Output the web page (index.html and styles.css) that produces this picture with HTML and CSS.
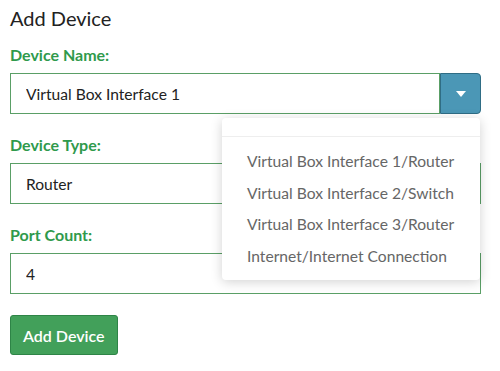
FILE: index.html
```html
<!DOCTYPE html>
<html lang="en">
<head>
  <meta charset="UTF-8">
  <meta name="viewport" content="width=device-width, initial-scale=1.0">
  <title>Add Device</title>
  <link rel="stylesheet" href="styles.css">
</head>
<body>

  <div class="container">
    <h1>Add Device</h1>

    <!-- Device name with dropdown of known interfaces -->
    <div class="form-group">
      <label for="deviceName">Device Name:</label>
      <div class="input-group">
        <input type="text" id="deviceName" value="Virtual Box Interface 1">
        <button class="dropdown-btn" id="dropdownBtn">
          <svg width="10" height="6" viewBox="0 0 10 6"><path d="M0 0 L10 0 L5 6 Z" fill="#fff"/></svg>
        </button>
        <div class="dropdown-menu" id="dropdownMenu">
          <div class="dropdown-header"></div>
          <ul>
            <li>Virtual Box Interface 1/Router</li>
            <li>Virtual Box Interface 2/Switch</li>
            <li>Virtual Box Interface 3/Router</li>
            <li>Internet/Internet Connection</li>
          </ul>
        </div>
      </div>
    </div>

    <div class="form-group">
      <label for="deviceType">Device Type:</label>
      <input type="text" id="deviceType" value="Router">
    </div>

    <div class="form-group">
      <label for="portCount">Port Count:</label>
      <input type="text" id="portCount" value="4">
    </div>

    <button class="btn" id="addDeviceBtn">Add Device</button>
  </div>

</body>
</html>
```

FILE: styles.css
```css
body {
  font-family: Lato, "Open Sans", sans-serif;
  margin: 0;
  color: #222;
}
.container {
  width: 471px;
  padding: 8px 10px;
}
h1 {
  font-size: 20px;
  font-weight: normal;
  margin: 0 0 17px;
  line-height: 20px;
}
.form-group {
  margin-bottom: 21px;
}
.form-group label {
  display: block;
  color: #2f9a4c;
  font-weight: bold;
  font-size: 16px;
  line-height: 20px;
  margin-bottom: 8px;
}
.form-group input {
  display: block;
  box-sizing: border-box;
  width: 100%;
  height: 41px;
  padding: 0 15px;
  border: 1px solid #5a9f66;
  font-family: inherit;
  font-size: 15.6px;
  color: #222;
  outline: none;
}
.input-group {
  position: relative;
  display: flex;
}
.input-group input {
  flex: 1;
}
.dropdown-btn {
  width: 41px;
  height: 41px;
  background-color: #4b97b6;
  border: 1px solid #2f6d85;
  border-radius: 0 4px 4px 0;
  display: flex;
  align-items: center;
  justify-content: center;
  padding: 0;
  cursor: pointer;
}
.dropdown-menu {
  position: absolute;
  top: 45px;
  left: 212px;
  width: 258px;
  background: #fff;
  border-radius: 4px;
  box-shadow: 0 2px 12px rgba(0, 0, 0, 0.18);
  z-index: 10;
  padding-bottom: 8px;
}
.dropdown-header {
  height: 18px;
  border-bottom: 1px solid #eee;
}
.dropdown-menu ul {
  list-style: none;
  margin: 0;
  padding: 9px 0 0;
}
.dropdown-menu li {
  padding: 0 25px;
  line-height: 31.5px;
  font-size: 15.6px;
  color: #666;
  white-space: nowrap;
}
.btn {
  background-color: #42a05a;
  color: white;
  font-family: inherit;
  font-size: 16px;
  font-weight: 600;
  height: 40px;
  padding: 0 12px;
  border: 1px solid #2e8447;
  border-radius: 3px;
  cursor: pointer;
}
```
